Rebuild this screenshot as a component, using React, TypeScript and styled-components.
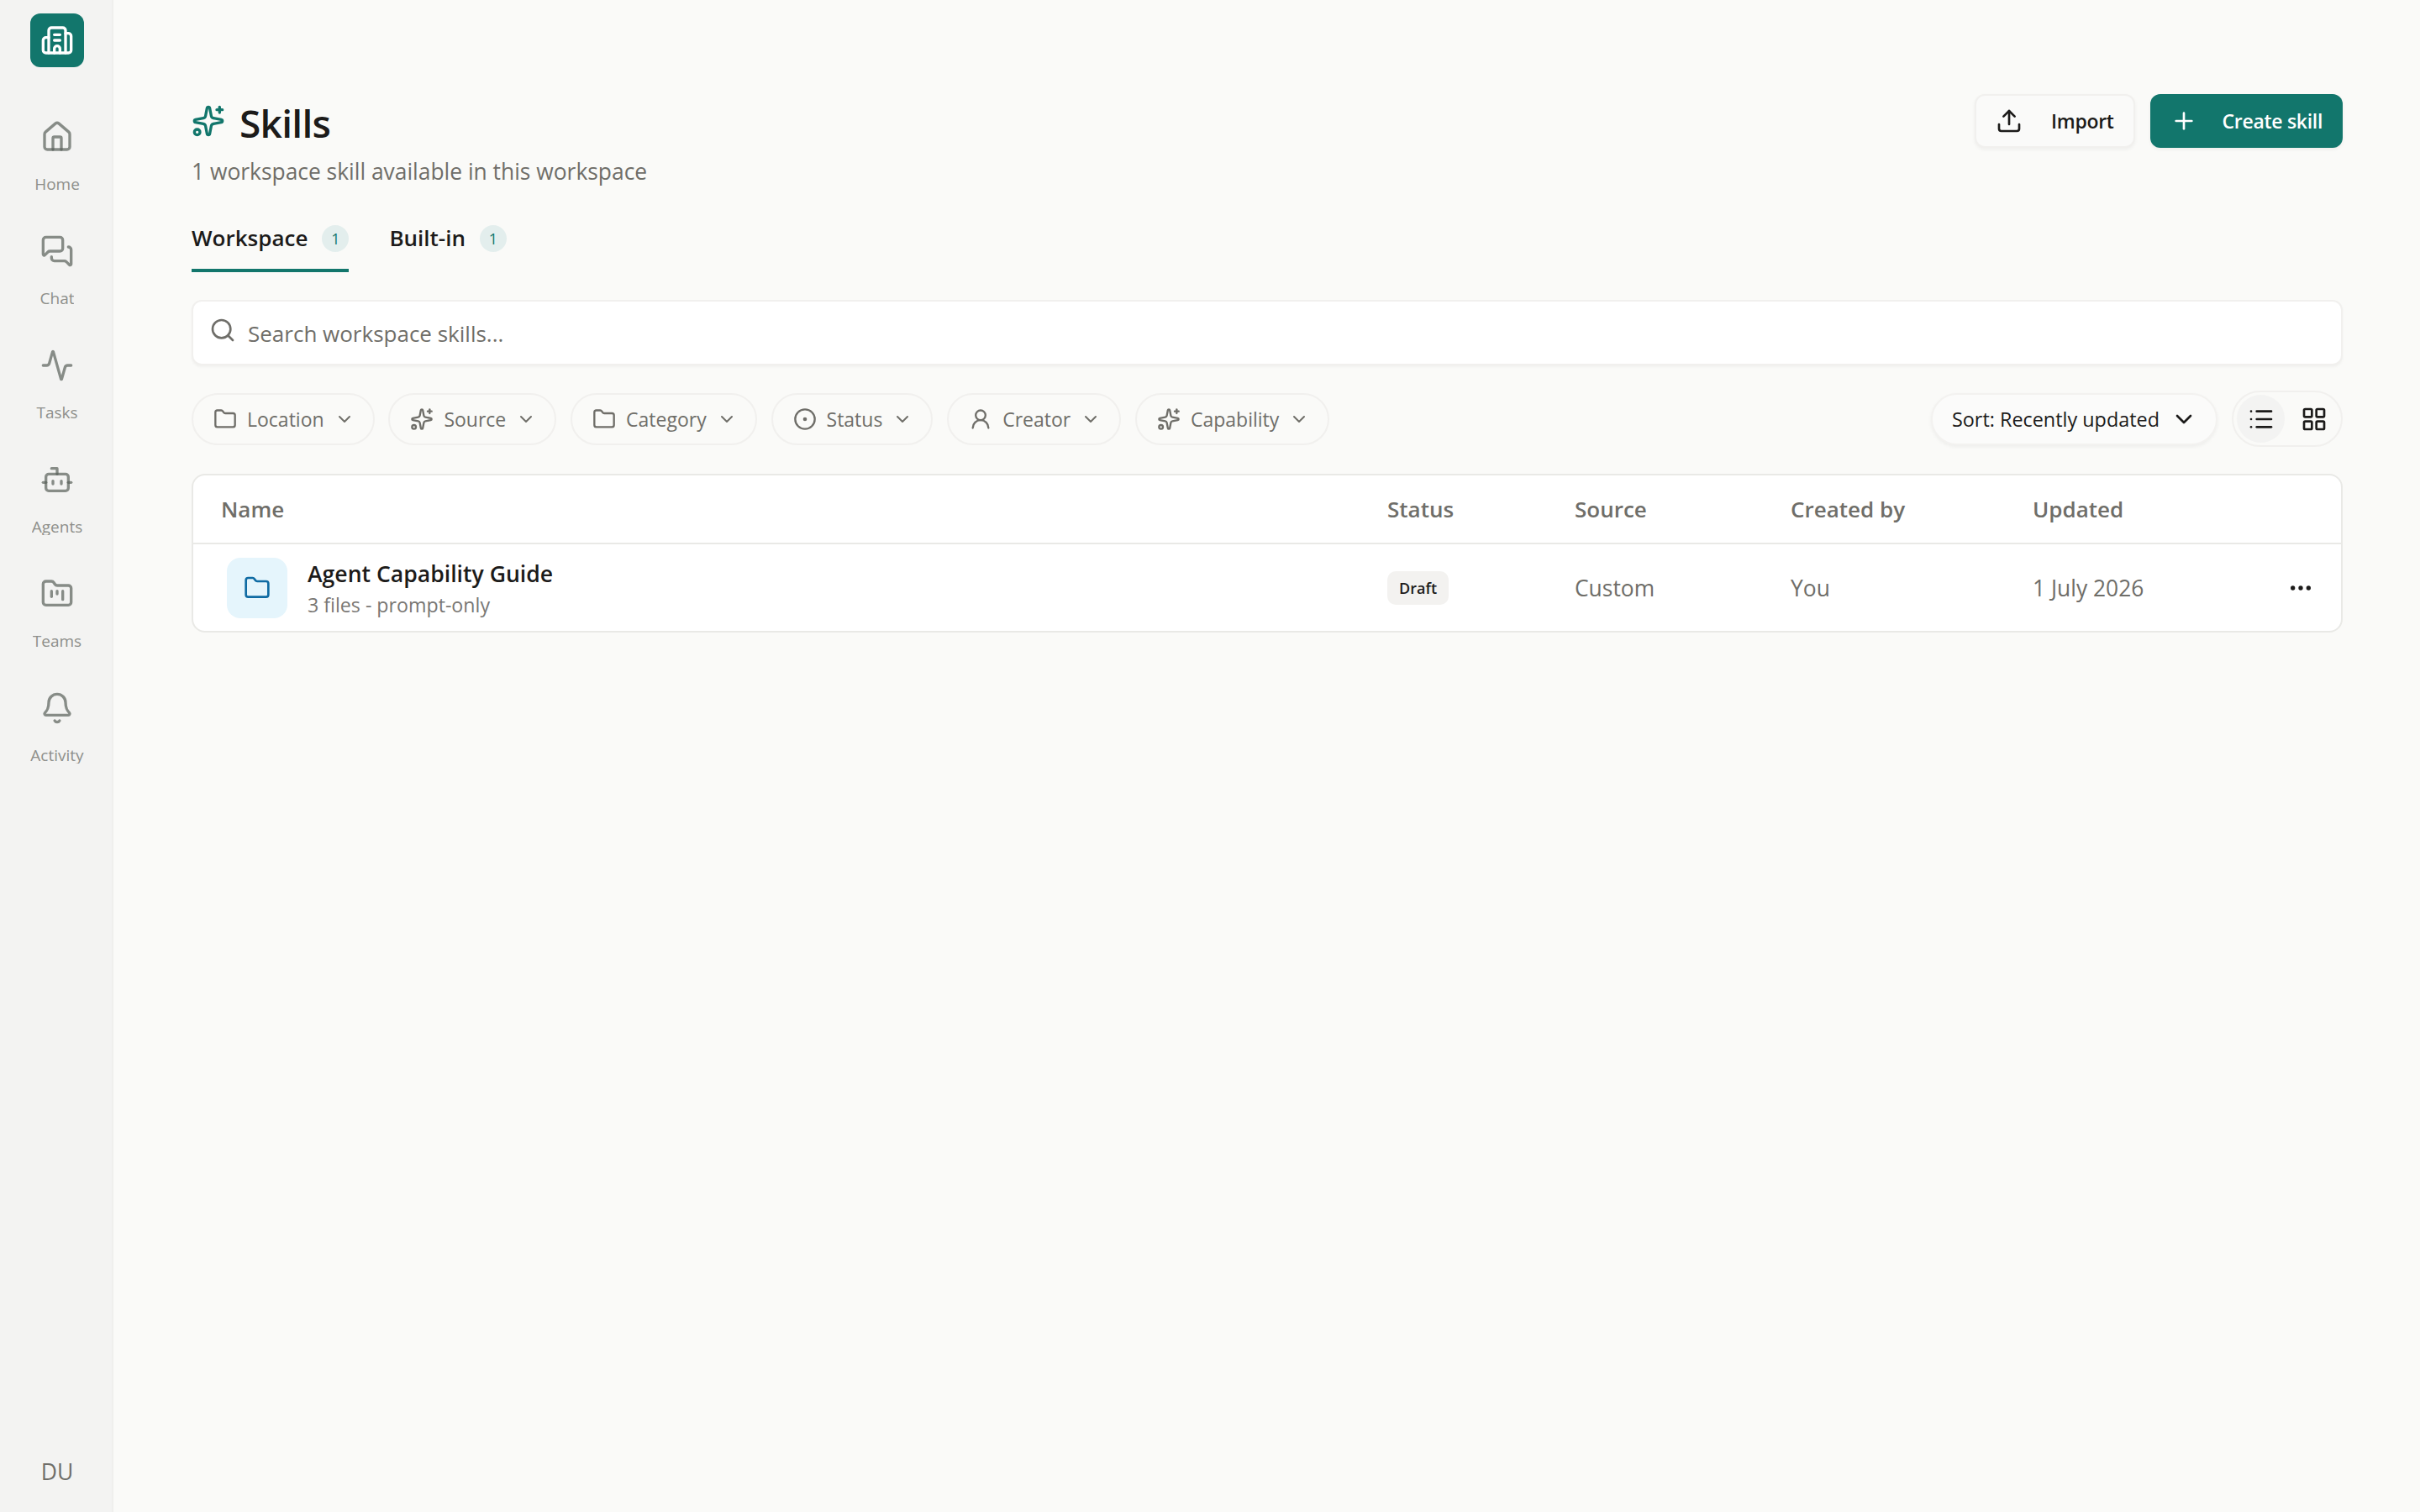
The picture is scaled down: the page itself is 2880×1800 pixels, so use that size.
import styled, { createGlobalStyle } from 'styled-components'
import {
  Activity, Bell, Bot, Building2, ChevronDown, CircleDot, Ellipsis, Folder, FolderKanban, House,
  LayoutGrid, List, MessagesSquare, Plus, Search, Sparkles, Upload, UserRound,
} from 'lucide-react'

const GlobalStyle = createGlobalStyle`
  html, body { margin: 0; padding: 0; height: 100%; }
  body {
    background: #fafaf8;
    color: #1c1b1a;
    font-family: "Open Sans", "Noto Sans", sans-serif;
  }
  #root { height: 100%; }
`

const Shell = styled.div`
  display: flex;
  height: 1800px;
`

const Sidebar = styled.aside`
  width: 135px;
  box-sizing: border-box;
  flex-shrink: 0;
  background: #f3f3f2;
  border-right: 2px solid #efefed;
  padding: 16px 0 0 3px;
  display: flex;
  flex-direction: column;
  align-items: center;
`

const Logo = styled.div`
  width: 64px;
  height: 64px;
  border-radius: 12px;
  background: #12766c;
  color: #fff;
  display: flex;
  align-items: center;
  justify-content: center;
`

const Nav = styled.nav`
  margin-top: 63px;
  display: flex;
  flex-direction: column;
  gap: 50px;
`

const NavItem = styled.a`
  display: flex;
  flex-direction: column;
  align-items: center;
  gap: 26px;
  color: rgba(88, 96, 90, 0.7);
`

const NavLabel = styled.span`
  font-size: 19px;
  line-height: 20px;
  height: 20px;
  overflow: hidden;
  color: #8e8f8b;
`

const Avatar = styled.div`
  margin-top: auto;
  margin-bottom: 30px;
  font-size: 26.5px;
  line-height: 36px;
  color: #6f6e69;
`

const Main = styled.main`
  flex: 1;
  padding: 112px 92px 0 93px;
  min-width: 0;
`

const Header = styled.header`
  display: flex;
  justify-content: space-between;
  align-items: flex-start;
`

const TitleRow = styled.div`
  display: flex;
  align-items: center;
  gap: 17px;
  height: 64px;
  color: #12766c;
`

const Title = styled.h1`
  margin: 0;
  padding-top: 4px;
  font-size: 46px;
  letter-spacing: -0.7px;
  line-height: 64px;
  font-weight: 600;
  color: #1c1b1a;
`

const Subtitle = styled.p`
  margin: 8px 0 0;
  font-size: 26.4px;
  line-height: 40px;
  color: #6f6e69;
`

const Actions = styled.div`
  display: flex;
  gap: 18px;
`

const ActionButton = styled.button<{ $primary?: boolean }>`
  height: 64px;
  box-sizing: border-box;
  border-radius: 12px;
  display: flex;
  align-items: center;
  font: 600 23px "Open Sans", sans-serif;
  letter-spacing: -0.3px;
  cursor: pointer;
  padding: ${p => (p.$primary ? '0 24px 0 24px' : '0 23px 0 23px')};
  gap: ${p => (p.$primary ? '30px' : '34px')};
  color: ${p => (p.$primary ? '#fff' : '#1c1b1a')};
  background: ${p => (p.$primary ? '#12766c' : '#fafaf9')};
  border: ${p => (p.$primary ? 'none' : '2px solid #f1f0ee')};
  box-shadow: 0 2px 4px rgba(0, 0, 0, 0.05);
`

const Tabs = styled.div`
  display: flex;
  gap: 48px;
  margin-top: 35px;
`

const Tab = styled.div<{ $active?: boolean }>`
  height: 65px;
  box-sizing: border-box;
  padding-top: 6px;
  display: flex;
  align-items: flex-start;
  gap: 17px;
  border-bottom: 4px solid ${p => (p.$active ? '#12766c' : 'transparent')};
  font-size: 26px;
  line-height: 36px;
  font-weight: 600;
`

const TabCount = styled.span`
  width: 32px;
  height: 32px;
  margin-top: 3px;
  border-radius: 50%;
  background: #e3eeed;
  color: #12766c;
  font-size: 18px;
  font-weight: 400;
  line-height: 32px;
  text-align: center;
`

const SearchBox = styled.label`
  margin-top: 33px;
  height: 78px;
  box-sizing: border-box;
  background: #fff;
  border: 2px solid #f1f0ee;
  border-radius: 12px;
  box-shadow: 0 2px 3px rgba(0, 0, 0, 0.04);
  display: flex;
  align-items: center;
  gap: 12px;
  padding: 0 0 0 19px;
  color: #6f6e69;
  svg { margin-top: -6px; }
`

const SearchInput = styled.input`
  flex: 1;
  margin-top: 2px;
  border: none;
  outline: none;
  background: none;
  font: 26px "Open Sans", sans-serif;
  color: #1c1b1a;
  &::placeholder { color: #6f6e69; opacity: 1; }
`

const Toolbar = styled.div`
  margin-top: 30px;
  height: 67px;
  display: flex;
  align-items: center;
  justify-content: space-between;
`

const Filters = styled.div`
  display: flex;
  gap: 16.8px;
`

const FilterPill = styled.button`
  height: 62px;
  box-sizing: border-box;
  padding: 0 22px 0 24px;
  border: 2px solid #f1f0ee;
  border-radius: 31px;
  background: #fafaf8;
  color: #6f6e69;
  font: 23px "Open Sans", sans-serif;
  display: flex;
  align-items: center;
  gap: 12px;
`

const View = styled.div`
  display: flex;
  align-items: center;
  gap: 17px;
`

const SortButton = styled.button`
  height: 62px;
  box-sizing: border-box;
  padding: 0 22px 0 23px;
  border: 2px solid #f3f2f0;
  border-radius: 31px;
  background: #fbfbfa;
  box-shadow: 0 2px 4px rgba(0, 0, 0, 0.05);
  color: #1c1b1a;
  font: 500 23.4px "Open Sans", sans-serif;
  display: flex;
  align-items: center;
  gap: 13px;
`

const ViewToggle = styled.div`
  height: 67px;
  box-sizing: border-box;
  border: 2px solid #f1f0ee;
  border-radius: 34px;
  padding: 0 4px;
  display: flex;
  align-items: center;
  gap: 6px;
`

const ViewButton = styled.span<{ $active?: boolean }>`
  width: 57px;
  height: 57px;
  border-radius: 50%;
  display: flex;
  align-items: center;
  justify-content: center;
  background: ${p => (p.$active ? '#f3f3f2' : 'transparent')};
`

const Table = styled.div`
  margin-top: 32px;
  background: #fff;
  border: 2px solid #e9e9e6;
  border-radius: 16px;
  overflow: hidden;
`

const Row = styled.div<{ $head?: boolean }>`
  display: grid;
  grid-template-columns: 1421px 223px 257px 288px 1fr 64px;
  align-items: center;
  height: ${p => (p.$head ? '80px' : '103px')};
  color: #6f6e69;
  font-size: ${p => (p.$head ? '26px' : '26.4px')};
  font-weight: ${p => (p.$head ? 600 : 400)};
  border-bottom: ${p => (p.$head ? '2px solid #e9e9e6' : 'none')};
`

const NameHead = styled.div`
  padding-left: 33px;
`

const NameCell = styled.div`
  display: flex;
  align-items: center;
  gap: 24px;
  padding-left: 40px;
`

const FolderTile = styled.div`
  width: 72px;
  height: 72px;
  border-radius: 16px;
  background: #e5f5fc;
  color: #0f6ba3;
  display: flex;
  align-items: center;
  justify-content: center;
`

const SkillName = styled.div`
  margin-top: 2px;
  font-size: 26.6px;
  line-height: 36px;
  font-weight: 600;
  color: #1c1b1a;
`

const SkillMeta = styled.div`
  margin-top: 3px;
  font-size: 23.2px;
  line-height: 32px;
  color: #797774;
`

const Badge = styled.span`
  display: inline-block;
  height: 40px;
  padding: 0 14px;
  border-radius: 10px;
  background: #f3f2f0;
  color: #1c1b1a;
  font-size: 18px;
  font-weight: 600;
  line-height: 40px;
`

const MoreCell = styled.div`
  color: #1c1b1a;
  display: flex;
`

const navItems = [
  { label: 'Home', icon: House },
  { label: 'Chat', icon: MessagesSquare },
  { label: 'Tasks', icon: Activity },
  { label: 'Agents', icon: Bot },
  { label: 'Teams', icon: FolderKanban },
  { label: 'Activity', icon: Bell },
]

const filters = [
  { label: 'Location', icon: Folder },
  { label: 'Source', icon: Sparkles },
  { label: 'Category', icon: Folder },
  { label: 'Status', icon: CircleDot },
  { label: 'Creator', icon: UserRound },
  { label: 'Capability', icon: Sparkles },
]

export default function App() {
  return (
    <>
      <GlobalStyle />
      <Shell>
        <Sidebar>
          <Logo><Building2 size={40} /></Logo>
          <Nav>
            {navItems.map(({ label, icon: Icon }) => (
              <NavItem key={label}>
                <Icon size={40} />
                <NavLabel>{label}</NavLabel>
              </NavItem>
            ))}
          </Nav>
          <Avatar>DU</Avatar>
        </Sidebar>
        <Main>
          <Header>
            <div>
              <TitleRow>
                <Sparkles size={40} />
                <Title>Skills</Title>
              </TitleRow>
              <Subtitle>1 workspace skill available in this workspace</Subtitle>
            </div>
            <Actions>
              <ActionButton><Upload size={32} />Import</ActionButton>
              <ActionButton $primary><Plus size={32} />Create skill</ActionButton>
            </Actions>
          </Header>
          <Tabs>
            <Tab $active>Workspace<TabCount>1</TabCount></Tab>
            <Tab>Built-in<TabCount>1</TabCount></Tab>
          </Tabs>
          <SearchBox>
            <Search size={32} />
            <SearchInput placeholder="Search workspace skills..." />
          </SearchBox>
          <Toolbar>
            <Filters>
              {filters.map(({ label, icon: Icon }) => (
                <FilterPill key={label}>
                  <Icon size={28} />
                  {label}
                  <ChevronDown size={24} />
                </FilterPill>
              ))}
            </Filters>
            <View>
              <SortButton>Sort: Recently updated<ChevronDown size={32} /></SortButton>
              <ViewToggle>
                <ViewButton $active><List size={32} /></ViewButton>
                <ViewButton><LayoutGrid size={32} /></ViewButton>
              </ViewToggle>
            </View>
          </Toolbar>
          <Table>
            <Row $head>
              <NameHead>Name</NameHead>
              <div>Status</div>
              <div>Source</div>
              <div>Created by</div>
              <div>Updated</div>
              <div />
            </Row>
            <Row>
              <NameCell>
                <FolderTile><Folder size={32} /></FolderTile>
                <div>
                  <SkillName>Agent Capability Guide</SkillName>
                  <SkillMeta>3 files - prompt-only</SkillMeta>
                </div>
              </NameCell>
              <div><Badge>Draft</Badge></div>
              <div>Custom</div>
              <div>You</div>
              <div>1 July 2026</div>
              <MoreCell><Ellipsis size={32} /></MoreCell>
            </Row>
          </Table>
        </Main>
      </Shell>
    </>
  )
}
